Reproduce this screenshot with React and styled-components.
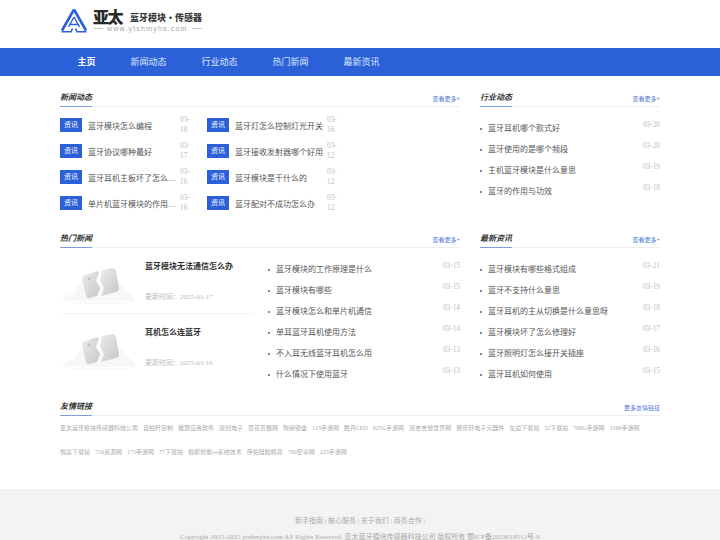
import React from 'react'
import styled, { createGlobalStyle } from 'styled-components'

const GlobalStyle = createGlobalStyle`
html, body {
    margin: 0;
    padding: 0;
    background: #fff;
    overflow: hidden;
    font-family: "Liberation Serif", "Noto Sans CJK SC", serif;
}
* { box-sizing: border-box; }
ul { margin: 0; padding: 0; list-style: none; }
`

const Wrap = styled.div`
    width: 600px;
    margin: 0 auto;
`

const Header = styled.header`
    height: 48px;
`

const LogoBox = styled.div`
    display: flex;
    align-items: flex-start;
    padding-top: 8px;
    gap: 5px;
`

const LogoText = styled.div`
    display: flex;
    flex-direction: column;
`

const BrandRow = styled.div`
    display: flex;
    align-items: center;
    gap: 8px;
    height: 16px;
`

const BrandName = styled.span`
    font-size: 16px;
    font-weight: 900;
    color: #2a2a2a;
    letter-spacing: -1.5px;
    font-family: "Noto Sans CJK SC", serif;
`

const BrandSub = styled.span`
    font-size: 9px;
    font-weight: 900;
    color: #3a3a3a;
    padding-top: 2px;
    font-family: "Noto Sans CJK SC", serif;
`

const Domain = styled.div`
    display: flex;
    align-items: center;
    gap: 4px;
    margin-top: 1px;
    color: #a4a4a4;
    font-size: 7px;
    letter-spacing: 1.2px;
    font-family: "Liberation Sans", sans-serif;
    &::before, &::after {
        content: '';
        width: 10px;
        height: 1px;
        background: #c8c8c8;
    }
`

const NavBar = styled.nav`
    height: 28px;
    background: #2b60d9;
`

const NavList = styled.ul`
    display: flex;
    width: 600px;
    margin: 0 auto;
`

const NavItem = styled.li`
    width: 71px;
    text-align: center;
    line-height: 28px;
    font-size: 9px;
    color: ${p => (p.$active ? '#fff' : '#dfe7fa')};
    font-weight: ${p => (p.$active ? 'bold' : 'normal')};
    &:first-child { width: 53px; }
`

const Row = styled.div`
    display: flex;
    justify-content: space-between;
    padding-top: ${p => p.$top || 0}px;
`

const Section = styled.section`
    width: ${p => p.$width}px;
`

const SectionHead = styled.div`
    position: relative;
    display: flex;
    justify-content: space-between;
    align-items: flex-end;
    height: 20px;
    padding-bottom: 2px;
    border-bottom: 1px solid #eeeeee;
    &::after {
        content: '';
        position: absolute;
        left: 0;
        bottom: -1px;
        width: 32px;
        height: 1px;
        background: #7f9fdc;
    }
`

const SectionTitle = styled.h3`
    margin: 0;
    font-size: 8px;
    line-height: 12px;
    font-weight: bold;
    font-style: italic;
    color: #333;
`

const More = styled.a`
    margin-bottom: 1px;
    font-size: 6px;
    line-height: 8px;
    color: #4f79d6;
`

const TagGrid = styled.ul`
    display: grid;
    grid-template-columns: 147px 147px;
    padding-top: 5px;
`

const TagRow = styled.li`
    display: flex;
    align-items: center;
    height: 26px;
`

const Tag = styled.span`
    flex: none;
    width: 22px;
    height: 14px;
    margin-right: 6px;
    line-height: 14px;
    text-align: center;
    font-size: 7px;
    color: #fff;
    background: #2b60d9;
`

const TagText = styled.span`
    width: 88px;
    margin-right: 4px;
    font-size: 8px;
    color: #555;
    white-space: nowrap;
    overflow: hidden;
    text-overflow: ellipsis;
`

const TagDate = styled.span`
    width: 10px;
    font-size: 7.3px;
    line-height: 10px;
    color: #bbb;
    word-break: break-all;
`

const DotList = styled.ul`
    padding-top: ${p => p.$top}px;
`

const DotRow = styled.li`
    display: flex;
    justify-content: space-between;
    height: 21px;
    line-height: 21px;
    font-size: 8px;
    color: #555;
`

const DotText = styled.span`
    position: relative;
    padding-left: 8px;
    &::before {
        content: '';
        position: absolute;
        left: 0;
        top: 10px;
        width: 2px;
        height: 2px;
        background: #888;
    }
`

const DotDate = styled.span`
    font-size: 7.3px;
    line-height: 13px;
    color: #bbb;
`

const HotBody = styled.div`
    display: flex;
    justify-content: space-between;
`

const HotCards = styled.div`
    width: 195px;
    padding-top: 5px;
`

const HotCard = styled.div`
    display: flex;
    height: 61px;
    margin-bottom: 5px;
    padding-top: 8px;
    border-bottom: ${p => (p.$last ? 'none' : '1px solid #f4f4f4')};
`

const HotInfo = styled.div`
    margin-left: 10px;
`

const HotTitle = styled.div`
    font-size: 8px;
    line-height: 12px;
    font-weight: bold;
    color: #333;
`

const HotDate = styled.div`
    margin-top: 19px;
    font-size: 7px;
    line-height: 10px;
    color: #bbb;
`

const Links = styled.div`
    display: flex;
    flex-wrap: wrap;
    column-gap: 5px;
`

const LinkItem = styled.a`
    font-size: 6px;
    line-height: 24px;
    color: #aaa;
`

const Footer = styled.footer`
    height: 80px;
    margin-top: 25px;
    padding-top: 24px;
    background: #f3f3f3;
    text-align: center;
    font-size: 7px;
    line-height: 16px;
    color: #aaa;
`

const newsLeft = [
    ['蓝牙模块怎么编程', '03-18'],
    ['蓝牙灯怎么控制灯光开关', '03-16'],
    ['蓝牙协议哪种最好', '03-17'],
    ['蓝牙接收发射器哪个好用', '03-12'],
    ['蓝牙耳机主板坏了怎么修理好', '03-16'],
    ['蓝牙模块是干什么的', '03-12'],
    ['单片机蓝牙模块的作用是什么', '03-16'],
    ['蓝牙配对不成功怎么办', '03-12'],
]

const industry = [
    ['蓝牙耳机哪个款式好', '03-20'],
    ['蓝牙使用的是哪个频段', '03-20'],
    ['主机蓝牙模块是什么意思', '03-19'],
    ['蓝牙的作用与功效', '03-18'],
]

const hot = [
    ['蓝牙模块的工作原理是什么', '03-15'],
    ['蓝牙模块有哪些', '03-15'],
    ['蓝牙模块怎么和单片机通信', '03-14'],
    ['单耳蓝牙耳机使用方法', '03-14'],
    ['不入耳无线蓝牙耳机怎么用', '03-13'],
    ['什么情况下使用蓝牙', '03-13'],
]

const latest = [
    ['蓝牙模块有哪些格式组成', '03-21'],
    ['蓝牙不支持什么意思', '03-19'],
    ['蓝牙耳机的主从切换是什么意思呀', '03-18'],
    ['蓝牙模块坏了怎么修理好', '03-17'],
    ['蓝牙照明灯怎么接开关插座', '03-16'],
    ['蓝牙耳机如何使用', '03-15'],
]

const friends = [
    '亚太蓝牙模块传感器科技公司', '自拍杆定制', '锥意应用软件', '双创电子', '百花农根网', '陶瓷键盘',
    '123手游网', '胜丹LED', '925G手游网', '双吉吉他世界网', '赛乐轩电子元器件', '左边下载站', '52下载站',
    '700G手游网', '3166手游网', '悦奕下载站', '716资源网', '175手游网', '77下载站', '伯爵智能oa系统技术',
    '传佑硅胶模具', '700安卓网', '223手游网',
]

const LogoMark = () => (
    <svg width="28" height="25" viewBox="0 0 28 25" fill="none" stroke="#2b60d9">
        <path d="M14 1.5 L2 22.5 M14 1.5 L26 22.5" strokeWidth="2.6" />
        <path d="M14 9 L8.5 19 M14 9 L19.5 19 M9 16.5 L19 16.5" strokeWidth="1.4" />
        <path d="M1.5 23.8 L11 23.8 L12.5 20.5 M26.5 23.8 L17 23.8 L15.5 20.5" strokeWidth="1.6" />
    </svg>
)

const Placeholder = () => (
    <svg width="75" height="46" viewBox="0 0 75 46">
        <defs>
            <linearGradient id="crack" x1="0" y1="0" x2="1" y2="1">
                <stop offset="0" stopColor="#ececec" />
                <stop offset="1" stopColor="#c6c6c6" />
            </linearGradient>
        </defs>
        <path d="M2 40 Q7 31 14 34 Q18 18 30 24 L52 22 Q60 16 66 30 Q73 31 75 40 Z" fill="#f7f7f7" />
        <path d="M14 42 L66 42" stroke="#efefef" strokeWidth="1" />
        <path d="M23 15 L37 10 Q39 10 39 12 L36 20 L40 27 L37 35 L29 37 Q27 38 26 35 L22 18 Q22 16 23 15 Z" fill="url(#crack)" />
        <path d="M42 9 L52 7 Q55 7 56 10 L59 27 Q59 30 56 31 L41 35 L44 27 L40 20 Z" fill="url(#crack)" />
        <circle cx="29" cy="18" r="1.4" fill="#c2c2c2" />
    </svg>
)

const DotItems = ({ items, top }) => (
    <DotList $top={top}>
        {items.map(([title, date]) => (
            <DotRow key={title}>
                <DotText>{title}</DotText>
                <DotDate>{date}</DotDate>
            </DotRow>
        ))}
    </DotList>
)

const App = () => (
    <>
        <GlobalStyle />
        <Header>
            <Wrap>
                <LogoBox>
                    <LogoMark />
                    <LogoText>
                        <BrandRow>
                            <BrandName>亚太</BrandName>
                            <BrandSub>蓝牙模块·传感器</BrandSub>
                        </BrandRow>
                        <Domain>www.ytshmyhs.com</Domain>
                    </LogoText>
                </LogoBox>
            </Wrap>
        </Header>
        <NavBar>
            <NavList>
                <NavItem $active>主页</NavItem>
                <NavItem>新闻动态</NavItem>
                <NavItem>行业动态</NavItem>
                <NavItem>热门新闻</NavItem>
                <NavItem>最新资讯</NavItem>
            </NavList>
        </NavBar>
        <Wrap>
            <Row $top={11}>
                <Section $width={400}>
                    <SectionHead>
                        <SectionTitle>新闻动态</SectionTitle>
                        <More>查看更多+</More>
                    </SectionHead>
                    <TagGrid>
                        {newsLeft.map(([title, date]) => (
                            <TagRow key={title}>
                                <Tag>资讯</Tag>
                                <TagText>{title}</TagText>
                                <TagDate>{date}</TagDate>
                            </TagRow>
                        ))}
                    </TagGrid>
                </Section>
                <Section $width={180}>
                    <SectionHead>
                        <SectionTitle>行业动态</SectionTitle>
                        <More>查看更多+</More>
                    </SectionHead>
                    <DotItems items={industry} top={11} />
                </Section>
            </Row>
            <Row $top={12}>
                <Section $width={400}>
                    <SectionHead>
                        <SectionTitle>热门新闻</SectionTitle>
                        <More>查看更多+</More>
                    </SectionHead>
                    <HotBody>
                        <HotCards>
                            <HotCard>
                                <Placeholder />
                                <HotInfo>
                                    <HotTitle>蓝牙模块无法通信怎么办</HotTitle>
                                    <HotDate>更新时间：2025-03-17</HotDate>
                                </HotInfo>
                            </HotCard>
                            <HotCard $last>
                                <Placeholder />
                                <HotInfo>
                                    <HotTitle>耳机怎么连蓝牙</HotTitle>
                                    <HotDate>更新时间：2025-03-16</HotDate>
                                </HotInfo>
                            </HotCard>
                        </HotCards>
                        <Section $width={192}>
                            <DotItems items={hot} top={11} />
                        </Section>
                    </HotBody>
                </Section>
                <Section $width={180}>
                    <SectionHead>
                        <SectionTitle>最新资讯</SectionTitle>
                        <More>查看更多+</More>
                    </SectionHead>
                    <DotItems items={latest} top={11} />
                </Section>
            </Row>
            <Row $top={11}>
                <Section $width={600}>
                    <SectionHead>
                        <SectionTitle>友情链接</SectionTitle>
                        <More>更多友情链接</More>
                    </SectionHead>
                    <Links>
                        {friends.map(name => (
                            <LinkItem key={name}>{name}</LinkItem>
                        ))}
                    </Links>
                </Section>
            </Row>
        </Wrap>
        <Footer>
            <div>新手指南 | 核心服务 | 关于我们 | 商务合作 |</div>
            <div>Copyright 2015-2025 ytshmyhs.com All Rights Reserved. 亚太蓝牙模块传感器科技公司 版权所有 鄂ICP备2023018512号-9</div>
        </Footer>
    </>
)

export default App
